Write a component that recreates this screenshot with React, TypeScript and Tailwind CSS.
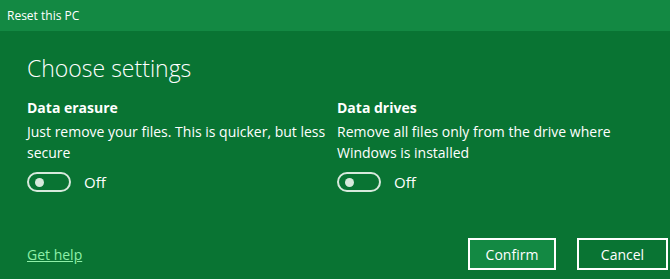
import React from "react";

function Toggle() {
  return (
    <div className="flex items-center gap-[13px]">
      <div className="w-[44px] h-[20px] rounded-full border-2 border-[#d7e9dc] flex items-center pl-[6px]">
        <div className="w-[9px] h-[9px] rounded-full bg-[#d7e9dc]" />
      </div>
      <span className="text-[15px] text-white">Off</span>
    </div>
  );
}

export default function App() {
  return (
    <div className="w-[670px] h-[279px] bg-[#097433] text-white flex flex-col" style={{ fontFamily: '"Open Sans", "Noto Sans", sans-serif' }}>
      <div className="h-[31px] bg-[#138943] flex items-center px-[7px] text-[12px]">Reset this PC</div>
      <div className="flex-1 flex flex-col pl-[27px] pr-[2px] pt-[22px]">
        <h1 className="text-[23px] font-light leading-[30px]">Choose settings</h1>
        <div className="grid grid-cols-[310px_1fr] mt-[15px]">
          <div className="flex flex-col">
            <div className="text-[14px] font-bold leading-[20px]">Data erasure</div>
            <div className="text-[14px] leading-[21px] mt-[3px] pr-2">Just remove your files. This is quicker, but less secure</div>
            <div className="mt-[8px]"><Toggle /></div>
          </div>
          <div className="flex flex-col">
            <div className="text-[14px] font-bold leading-[20px]">Data drives</div>
            <div className="text-[14px] leading-[21px] mt-[3px]">Remove all files only from the drive where Windows is installed</div>
            <div className="mt-[8px]"><Toggle /></div>
          </div>
        </div>
        <div className="flex items-center mt-auto mb-[9px]">
          <a className="text-[14px] text-[#8ef0a8] underline">Get help</a>
          <div className="ml-auto flex gap-[21px]">
            <button className="w-[88px] h-[32px] border-2 border-white bg-[#138943] text-[14px]">Confirm</button>
            <button className="w-[91px] h-[32px] border-2 border-white bg-[#097433] text-[14px]">Cancel</button>
          </div>
        </div>
      </div>
    </div>
  );
}
